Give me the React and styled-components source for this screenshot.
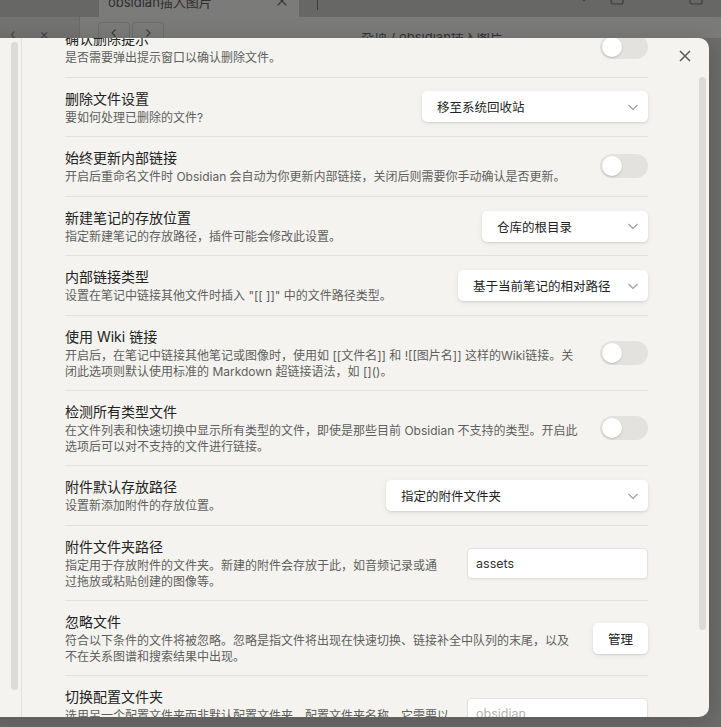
import React from 'react';
import styled, { createGlobalStyle } from 'styled-components';

// ****** data ****** //
const settings = [
  { title: '确认删除提示', desc: ['是否需要弹出提示窗口以确认删除文件。'], control: { type: 'toggle' } },
  { title: '删除文件设置', desc: ['要如何处理已删除的文件?'], control: { type: 'select', value: '移至系统回收站', width: 226 } },
  {
    title: '始终更新内部链接',
    desc: ['开启后重命名文件时 Obsidian 会自动为你更新内部链接，关闭后则需要你手动确认是否更新。'],
    control: { type: 'toggle' },
  },
  {
    title: '新建笔记的存放位置',
    desc: ['指定新建笔记的存放路径，插件可能会修改此设置。'],
    control: { type: 'select', value: '仓库的根目录', width: 166 },
  },
  {
    title: '内部链接类型',
    desc: ['设置在笔记中链接其他文件时插入 "[[ ]]" 中的文件路径类型。'],
    control: { type: 'select', value: '基于当前笔记的相对路径', width: 190 },
  },
  {
    title: '使用 Wiki 链接',
    desc: [
      '开启后，在笔记中链接其他笔记或图像时，使用如 [[文件名]] 和 ![[图片名]] 这样的Wiki链接。关',
      '闭此选项则默认使用标准的 Markdown 超链接语法，如 []()。',
    ],
    control: { type: 'toggle' },
  },
  {
    title: '检测所有类型文件',
    desc: [
      '在文件列表和快速切换中显示所有类型的文件，即使是那些目前 Obsidian 不支持的类型。开启此',
      '选项后可以对不支持的文件进行链接。',
    ],
    control: { type: 'toggle' },
  },
  {
    title: '附件默认存放路径',
    desc: ['设置新添加附件的存放位置。'],
    control: { type: 'select', value: '指定的附件文件夹', width: 262 },
  },
  {
    title: '附件文件夹路径',
    desc: ['指定用于存放附件的文件夹。新建的附件会存放于此，如音频记录或通', '过拖放或粘贴创建的图像等。'],
    control: { type: 'input', value: 'assets' },
  },
  {
    title: '忽略文件',
    desc: [
      '符合以下条件的文件将被忽略。忽略是指文件将出现在快速切换、链接补全中队列的末尾，以及',
      '不在关系图谱和搜索结果中出现。',
    ],
    control: { type: 'button', value: '管理' },
  },
  {
    title: '切换配置文件夹',
    desc: ['选用另一个配置文件夹而非默认配置文件夹。配置文件夹名称，它需要以', '“.”开头。'],
    control: { type: 'input', placeholder: 'obsidian' },
  },
];

// ****** icons ****** //
const Chevron = ({ color = '#9a9a98' }) => (
  <svg width="12" height="12" viewBox="0 0 12 12" fill="none">
    <path d="M1.5 4l4.5 4.5L10.5 4" stroke={color} strokeWidth="1.1" />
  </svg>
);

const CloseIcon = ({ size = 14, color = '#5a5a58' }) => (
  <svg width={size} height={size} viewBox="0 0 14 14" fill="none">
    <path d="M2 2l10 10M12 2L2 12" stroke={color} strokeWidth="1.5" />
  </svg>
);

const SquareIcon = () => (
  <svg width="14" height="14" viewBox="0 0 14 14" fill="none">
    <rect x="1" y="1" width="12" height="12" rx="2" stroke="#3d3d3d" strokeWidth="1.2" />
  </svg>
);

const ArrowIcon = ({ dir }) => (
  <svg width="10" height="10" viewBox="0 0 10 10" fill="none">
    <path d={dir === 'left' ? 'M6.5 1.5L3 5l3.5 3.5' : 'M3.5 1.5L7 5 3.5 8.5'} stroke="#3d3d3d" strokeWidth="1.2" />
  </svg>
);

// ****** components ****** //
const Control = ({ control }) => {
  switch (control.type) {
    case 'toggle':
      return (
        <Toggle>
          <Knob />
        </Toggle>
      );
    case 'select':
      return (
        <Select $width={control.width}>
          <span>{control.value}</span>
          <Chevron />
        </Select>
      );
    case 'input':
      return <TextInput readOnly value={control.value || ''} placeholder={control.placeholder} />;
    default:
      return <Button>{control.value}</Button>;
  }
};

const App = () => {
  return (
    <>
      <GlobalStyle />
      <Screen>
        <TabStrip>
          <TabSpacer />
          <Tab>
            <span>obsidian插入图片</span>
            <CloseIcon size={12} color="#3a3a3a" />
          </Tab>
          <TabTail>
            <NewTab />
            <TabIcons>
              <Chevron color="#3d3d3d" />
              <SquareIcon />
              <Spacer />
              <SquareIcon />
            </TabIcons>
          </TabTail>
        </TabStrip>
        <ViewHeader>
          <HeaderSide>
            <span>‹</span>
            <span>×</span>
          </HeaderSide>
          <NavButtons>
            <NavButton>
              <ArrowIcon dir="left" />
            </NavButton>
            <NavButton>
              <ArrowIcon dir="right" />
            </NavButton>
          </NavButtons>
          <Breadcrumb>杂项 / obsidian插入图片</Breadcrumb>
        </ViewHeader>

        <Modal>
          <Sidebar>
            <SideThumb />
          </Sidebar>
          <Content>
            <Pane>
              <List>
                {settings.map((item) => (
                  <Item key={item.title}>
                    <Info>
                      <Title>{item.title}</Title>
                      <Desc>
                        {item.desc.map((line) => (
                          <DescLine key={line}>{line}</DescLine>
                        ))}
                      </Desc>
                    </Info>
                    <Control control={item.control} />
                  </Item>
                ))}
              </List>
            </Pane>
            <ScrollTrack>
              <ScrollThumb />
            </ScrollTrack>
            <CloseButton>
              <CloseIcon />
            </CloseButton>
          </Content>
        </Modal>
      </Screen>
    </>
  );
};

const GlobalStyle = createGlobalStyle`
  body {
    margin: 0;
    background: #6c6c6b;
    font-family: "Inter", "Noto Sans CJK SC", sans-serif;
    overflow: hidden;
  }
`;

const Screen = styled.div`
  position: relative;
  width: 721px;
  height: 727px;
  overflow: hidden;
  background: #6c6c6b;
`;

const TabStrip = styled.div`
  display: flex;
  height: 32px;
  margin-top: -15px;
  background: #676766;
`;

const TabSpacer = styled.div`
  width: 99px;
`;

const Tab = styled.div`
  width: 200px;
  display: flex;
  align-items: center;
  justify-content: space-between;
  padding: 0 11px 0 9px;
  box-sizing: border-box;
  background: #7b7b79;
  border-radius: 6px 6px 0 0;
  font-size: 13px;
  color: #2e2e2e;
`;

const TabTail = styled.div`
  flex: 1;
  display: flex;
  align-items: flex-start;
  padding-left: 18px;
`;

const NewTab = styled.div`
  width: 1px;
  height: 25px;
  background: #3d3d3d;
`;

const TabIcons = styled.div`
  flex: 1;
  display: flex;
  align-items: center;
  gap: 20px;
  height: 26px;
  padding: 0 18px 0 260px;
`;

const Spacer = styled.div`
  flex: 1;
`;

const ViewHeader = styled.div`
  display: flex;
  align-items: flex-end;
  height: 21px;
  background: #7b7b79;
`;

const HeaderSide = styled.div`
  width: 80px;
  height: 100%;
  display: flex;
  align-items: flex-end;
  gap: 24px;
  padding-left: 10px;
  box-sizing: border-box;
  border-right: 1px solid #6a6a69;
  background: #737372;
  font-size: 14px;
  line-height: 8px;
  color: #444;
`;

const NavButtons = styled.div`
  display: flex;
  gap: 2px;
  margin-left: 18px;
`;

const NavButton = styled.div`
  width: 30px;
  height: 15px;
  display: flex;
  align-items: flex-end;
  justify-content: center;
  border: 1px solid #6c6c6b;
  border-bottom: none;
  border-radius: 4px 4px 0 0;
  overflow: hidden;
`;

const Breadcrumb = styled.div`
  margin-left: 197px;
  font-size: 13px;
  line-height: 8px;
  color: #333;
  height: 5px;
  overflow: hidden;
`;

const Modal = styled.div`
  position: absolute;
  left: -20px;
  top: 38px;
  width: 729px;
  height: 679px;
  display: flex;
  background: #f4f3ef;
  border-radius: 10px;
  overflow: hidden;
  box-shadow: 0 4px 24px rgba(0, 0, 0, 0.18);
`;

const Sidebar = styled.div`
  width: 38px;
  flex: none;
  display: flex;
  justify-content: flex-end;
  padding: 4px 3px 27px 0;
  box-sizing: content-box;
  border-right: 1px solid #e2e1dd;
  background: #f4f3ef;
`;

const SideThumb = styled.div`
  width: 7px;
  border-radius: 4px;
  background: #dcdbd7;
`;

const Content = styled.div`
  position: relative;
  flex: 1;
  display: flex;
  overflow: hidden;
`;

const Pane = styled.div`
  width: 586px;
  padding: 0 51px 0 43px;
  overflow: hidden;
`;

const List = styled.div`
  margin-top: -21px;
`;

const Item = styled.div`
  display: flex;
  align-items: center;
  padding: 11px 0;
  border-top: 1px solid #e2e1dd;
`;

const Info = styled.div`
  flex: 1 1 auto;
  min-width: 0;
  margin-right: 20px;
`;

const Title = styled.div`
  font-size: 14px;
  line-height: 19px;
  color: #222;
`;

const Desc = styled.div`
  padding-top: 2px;
  font-size: 12px;
  line-height: 15.6px;
  color: #5f5f5d;
`;

const DescLine = styled.div`
  white-space: nowrap;
`;

const Toggle = styled.div`
  flex: none;
  width: 48px;
  height: 24px;
  display: flex;
  align-items: center;
  padding: 0 2px;
  box-sizing: border-box;
  border-radius: 12px;
  background: #e3e2de;
`;

const Knob = styled.div`
  width: 20px;
  height: 20px;
  border-radius: 50%;
  background: #fff;
  box-shadow: 0 1px 2px rgba(0, 0, 0, 0.18);
`;

const Select = styled.div`
  flex: none;
  width: ${(p) => p.$width}px;
  height: 31px;
  display: flex;
  align-items: center;
  justify-content: space-between;
  padding: 0 9px 0 15px;
  box-sizing: border-box;
  background: #fff;
  border-radius: 5px;
  box-shadow: 0 1px 2px rgba(0, 0, 0, 0.1), 0 2px 6px rgba(0, 0, 0, 0.06);
  font-size: 12.5px;
  color: #222;
`;

const TextInput = styled.input`
  flex: none;
  width: 181px;
  height: 31px;
  padding: 0 8px;
  box-sizing: border-box;
  border: 1px solid #e2e1dd;
  border-radius: 4px;
  background: #fff;
  box-shadow: 0 1px 2px rgba(0, 0, 0, 0.06);
  font-family: "Inter", "Noto Sans CJK SC", sans-serif;
  font-size: 12.5px;
  color: #333;
  outline: none;

  &::placeholder {
    color: #b5b4b0;
  }
`;

const Button = styled.div`
  flex: none;
  height: 31px;
  display: flex;
  align-items: center;
  padding: 0 15px;
  background: #fff;
  border-radius: 5px;
  box-shadow: 0 1px 2px rgba(0, 0, 0, 0.1), 0 2px 6px rgba(0, 0, 0, 0.06);
  font-size: 12.5px;
  color: #222;
`;

const ScrollTrack = styled.div`
  width: 7px;
  padding: 39px 3px 87px 0;
  display: flex;
`;

const ScrollThumb = styled.div`
  flex: 1;
  border-radius: 4px;
  background: #dcdbd7;
`;

const CloseButton = styled.div`
  position: absolute;
  top: 4px;
  right: 10px;
  width: 28px;
  height: 28px;
  display: flex;
  align-items: center;
  justify-content: center;
`;

export default App;
